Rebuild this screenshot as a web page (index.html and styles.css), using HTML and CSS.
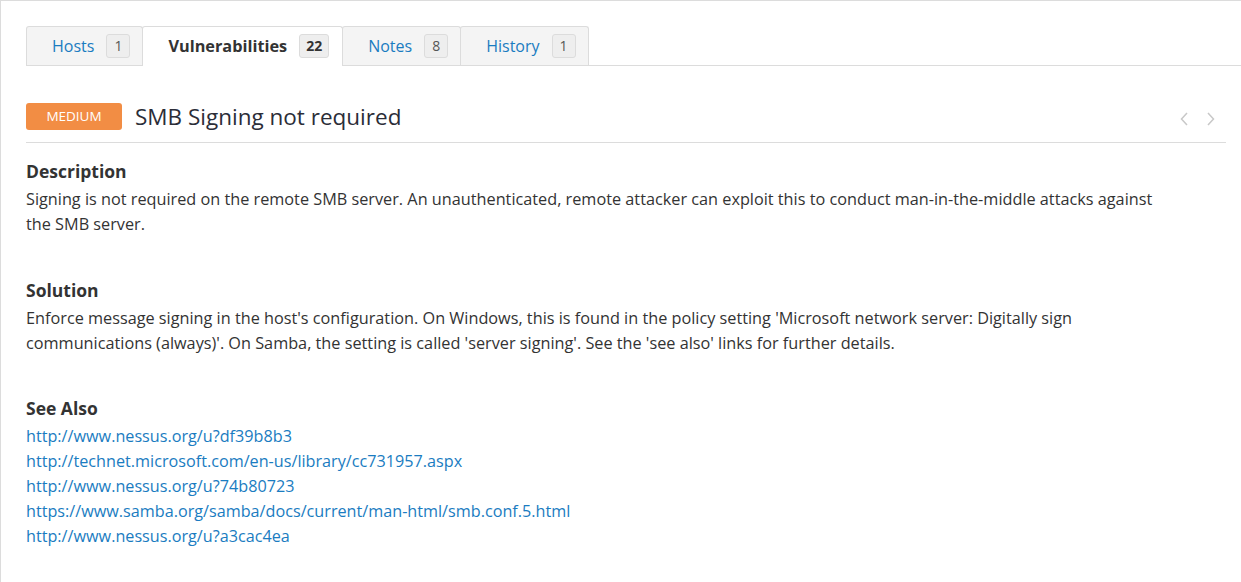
FILE: index.html
```html
<!DOCTYPE html>
<html lang="en">
<head>
<meta charset="utf-8">
<title>SMB Signing not required</title>
<link rel="stylesheet" href="styles.css">
</head>
<body>
<div class="page">
  <nav class="tabs">
    <a class="tab" href="#">Hosts <span class="count">1</span></a>
    <a class="tab active" href="#">Vulnerabilities <span class="count">22</span></a>
    <a class="tab" href="#">Notes <span class="count">8</span></a>
    <a class="tab" href="#">History <span class="count">1</span></a>
  </nav>

  <div class="title-row">
    <span class="severity">MEDIUM</span>
    <h1 class="title">SMB Signing not required</h1>
    <div class="pager">
      <svg width="8" height="14" viewBox="0 0 8 14"><polyline points="7,1 1.5,7 7,13" fill="none" stroke="#c8c8c8" stroke-width="1.5"/></svg>
      <svg width="8" height="14" viewBox="0 0 8 14"><polyline points="1,1 6.5,7 1,13" fill="none" stroke="#c8c8c8" stroke-width="1.5"/></svg>
    </div>
  </div>

  <section class="section">
    <h2>Description</h2>
    <p>Signing is not required on the remote SMB server. An unauthenticated, remote attacker can exploit this to conduct man-in-the-middle attacks against the SMB server.</p>
  </section>

  <section class="section">
    <h2>Solution</h2>
    <p>Enforce message signing in the host's configuration. On Windows, this is found in the policy setting 'Microsoft network server: Digitally sign communications (always)'. On Samba, the setting is called 'server signing'. See the 'see also' links for further details.</p>
  </section>

  <section class="section">
    <h2>See Also</h2>
    <ul class="links">
      <li><a href="#">http://www.nessus.org/u?df39b8b3</a></li>
      <li><a href="#">http://technet.microsoft.com/en-us/library/cc731957.aspx</a></li>
      <li><a href="#">http://www.nessus.org/u?74b80723</a></li>
      <li><a href="#">https://www.samba.org/samba/docs/current/man-html/smb.conf.5.html</a></li>
      <li><a href="#">http://www.nessus.org/u?a3cac4ea</a></li>
    </ul>
  </section>
</div>
</body>
</html>
```

FILE: styles.css
```css
html, body {
  margin: 0;
  padding: 0;
  background: #fff;
}

body {
  font-family: "Open Sans", "Liberation Sans", sans-serif;
  font-size: 16px;
  color: #333;
}

.page {
  border-left: 1px solid #dcdcdc;
  border-top: 1px solid #dcdcdc;
  min-height: 100vh;
  box-sizing: border-box;
  padding: 25px 0 0 25px;
}

.tabs {
  display: flex;
  border-bottom: 1px solid #dcdcdc;
  height: 39px;
}

.tab {
  display: flex;
  align-items: center;
  height: 38px;
  padding: 0 12px 0 25px;
  background: #f4f4f4;
  border: 1px solid #dcdcdc;
  border-bottom: none;
  border-radius: 3px 3px 0 0;
  margin-left: -1px;
  color: #1a7cc1;
  text-decoration: none;
  font-size: 16px;
}

.tab:first-child {
  margin-left: 0;
}

.tab.active {
  background: #fff;
  align-self: flex-start;
  color: #333;
  font-weight: 700;
  font-size: 16.3px;
  padding-left: 25px;
  padding-right: 13px;
  padding-bottom: 1px;
  box-sizing: border-box;
  height: 40px;
}

.count {
  display: inline-block;
  margin-left: 12px;
  height: 24px;
  line-height: 22px;
  box-sizing: border-box;
  padding: 0 7px;
  font-size: 14px;
  color: #555;
  background: #eee;
  border: 1px solid #dcdcdc;
  border-radius: 3px;
  font-weight: 400;
}

.tab.active .count {
  font-weight: 700;
  color: #333;
  padding: 0 6px;
}

.title-row {
  display: flex;
  align-items: center;
  margin: 37px 15px 0 0;
  padding-bottom: 12px;
  border-bottom: 1px solid #dcdcdc;
}

.severity {
  display: inline-block;
  width: 96px;
  height: 27px;
  line-height: 27px;
  text-align: center;
  background: #f28d44;
  color: #fff;
  font-size: 13.5px;
  border-radius: 3px;
}

.title {
  margin: 0 0 0 13px;
  font-size: 22.5px;
  font-weight: 400;
  color: #2b2d38;
  line-height: 27px;
  flex: 1;
}

.pager {
  display: flex;
  gap: 19px;
  margin-right: 11px;
  padding-top: 4px;
}

.section {
  max-width: 1150px;
  margin-top: 16px;
  margin-bottom: 40.5px;
}

.section h2 {
  margin: 0 0 3px;
  font-size: 17.5px;
  font-weight: 700;
  line-height: 25px;
  color: #333;
}

.section p {
  margin: 0;
  font-size: 16.25px;
  line-height: 25px;
}

.section + .section {
  margin-top: 0;
}

.links {
  list-style: none;
  margin: 0;
  padding: 0;
}

.links li {
  font-size: 16.2px;
  line-height: 25px;
}

.links a {
  color: #1a7cc1;
  text-decoration: none;
}
```
